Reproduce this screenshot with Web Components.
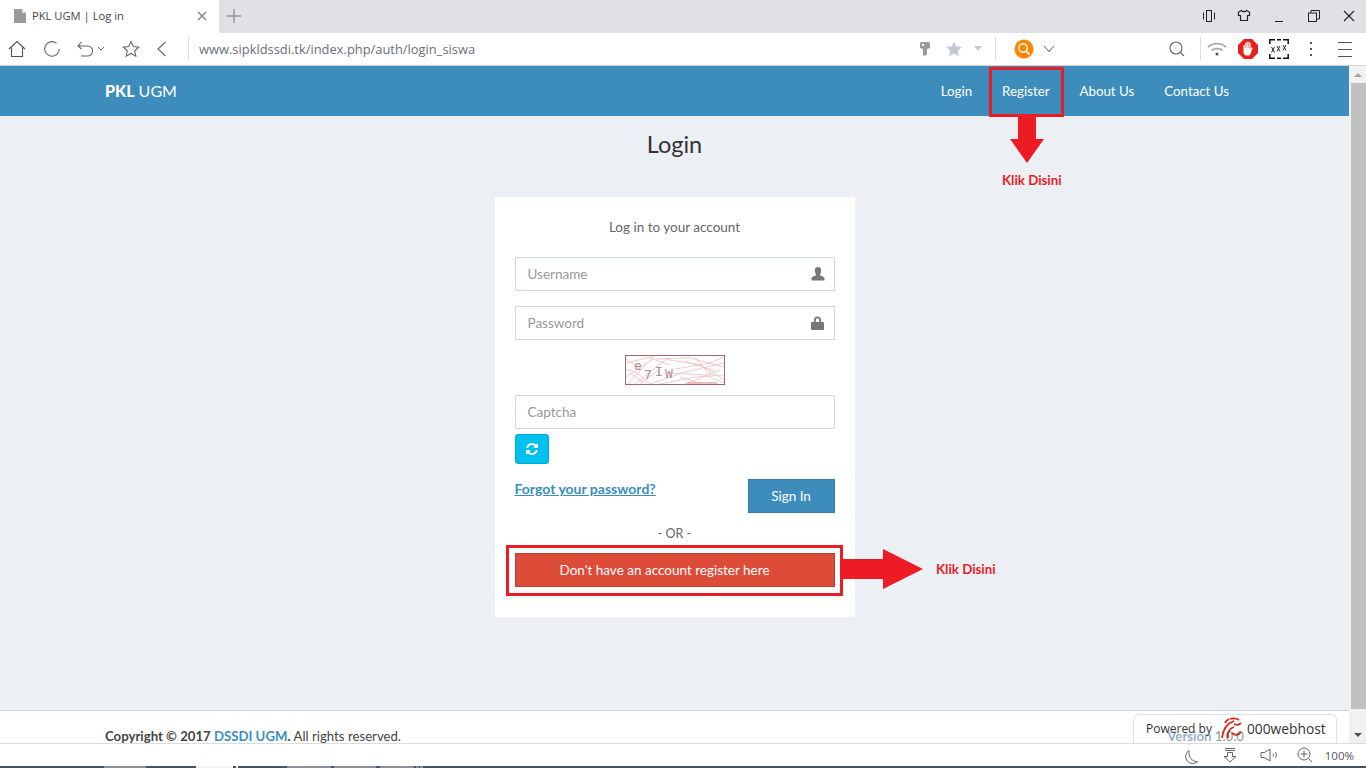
<!DOCTYPE html>
<html lang="en">
<head>
<meta charset="utf-8">
<title>PKL UGM | Log in</title>
<style>
    html, body { margin: 0; height: 100%; }
    body {
        width: 1366px;
        height: 768px;
        overflow: hidden;
        display: flex;
        flex-direction: column;
        position: relative;
        background: #fff;
        color: #444;
        font-family: "Lato", "Noto Sans", sans-serif;
        font-size: 13.3px;
    }
</style>
</head>
<body>
<browser-tabs tab-title="PKL UGM | Log in"></browser-tabs>
<browser-toolbar url="www.sipkldssdi.tk/index.php/auth/login_siswa"></browser-toolbar>
<page-viewport>
    <top-navbar></top-navbar>
    <login-page></login-page>
    <page-footer></page-footer>
</page-viewport>
<browser-status></browser-status>
<click-callout box="989,67,75,50" arrow="down" ax="1010" ay="116" tx="1002" ty="172"></click-callout>
<click-callout box="506,545,337,51" arrow="right" ax="843" ay="549" tx="936" ty="561"></click-callout>
<host-badge></host-badge>

<script>
const ICONS = {
    page: '<svg viewBox="0 0 14 16" width="14" height="16"><path fill="#9a9a9a" d="M1 1h8l4 4v10H1z"/><path fill="#fff" d="M9 1v4h4z" opacity=".7"/></svg>',
    close: '<svg viewBox="0 0 10 10" width="10" height="10"><path stroke="#8a8a8a" stroke-width="1.6" d="M1 1l8 8M9 1l-8 8"/></svg>',
    plus: '<svg viewBox="0 0 14 14" width="14" height="14"><path stroke="#777" d="M7 0v14M0 7h14"/></svg>',
    vibrate: '<svg viewBox="0 0 14 14" width="14" height="14" fill="none" stroke="#222"><rect x="4.5" y="1.5" width="5" height="11"/><path d="M1.5 3.5v7M12.5 3.5v7"/></svg>',
    shirt: '<svg viewBox="0 0 14 14" width="14" height="14" fill="none" stroke="#222" stroke-width="1.2"><path d="M4.5 1.5L1.5 3v3.5h2v5h7v-5h2V3l-3-1.5C9 3 5 3 4.5 1.5z"/></svg>',
    minimize: '<svg viewBox="0 0 14 14" width="14" height="14"><path stroke="#222" d="M3 12.5h8"/></svg>',
    restore: '<svg viewBox="0 0 14 14" width="14" height="14" fill="none" stroke="#222"><rect x="1.5" y="4" width="8" height="8.5"/><path d="M4 4V1.5h8.5V10H9.500"/></svg>',
    winclose: '<svg viewBox="0 0 14 14" width="14" height="14"><path stroke="#222" stroke-width="1.1" d="M2 2l10 10M12 2L2 12"/></svg>',
    home: '<svg viewBox="0 0 18 18" width="18" height="18" fill="none" stroke="#555" stroke-width="1.1"><path d="M1 9l8-7.500L17 9M3.500 7.500v9h11v-9"/></svg>',
    reload: '<svg viewBox="0 0 18 18" width="18" height="18" fill="none" stroke="#666" stroke-width="1.1"><path d="M13.500 3.200A7.300 7.300 0 1 0 16.300 9"/></svg>',
    undo: '<svg viewBox="0 0 18 18" width="18" height="18" fill="none" stroke="#666" stroke-width="1.1"><path d="M3 6h8.500a5 5 0 0 1 0 10H5M5.500 2L2 6l3.500 3"/></svg>',
    caretSmall: '<svg viewBox="0 0 8 6" width="8" height="6" fill="none" stroke="#666"><path d="M1 1l3 3 3-3"/></svg>',
    star: '<svg viewBox="0 0 18 18" width="18" height="18" fill="none" stroke="#666" stroke-width="1.100"><path d="M9 1.500l2.300 5 5.400.6-4 3.700 1.100 5.400L9 13.500l-4.800 2.700 1.100-5.400-4-3.700 5.400-.6z"/></svg>',
    back: '<svg viewBox="0 0 12 18" width="12" height="18" fill="none" stroke="#666" stroke-width="1.100"><path d="M9.500 2L2 9l7.500 7"/></svg>',
    key: '<svg viewBox="0 0 12 16" width="12" height="16"><path fill="#999" d="M2.500 1h7A1.500 1.500 0 0 1 11 2.500V7L8 8v5l-2 2-2-1V8L1 7V2.500A1.500 1.500 0 0 1 2.500 1z"/><path fill="#fff" d="M3 3h2v2H3z"/></svg>',
    starFill: '<svg viewBox="0 0 16 16" width="16" height="16"><path fill="#c4c8d0" d="M8 .5l2.300 5 5.400.6-4 3.700 1.100 5.400L8 12.500l-4.800 2.700 1.100-5.400-4-3.700 5.400-.6z"/></svg>',
    caretFill: '<svg viewBox="0 0 10 6" width="10" height="6"><path fill="#c4c8d0" d="M1 0h8L5 5z"/></svg>',
    orange: '<svg viewBox="0 0 20 20" width="20" height="20"><circle cx="10" cy="10" r="9.500" fill="#ff8400"/><circle cx="9" cy="9" r="4.200" fill="none" stroke="#fff" stroke-width="1.400"/><path stroke="#fff" stroke-width="1.600" d="M12 12l3.500 3.500"/></svg>',
    chevron: '<svg viewBox="0 0 12 8" width="12" height="8" fill="none" stroke="#777" stroke-width="1.100"><path d="M1 1l5 5.500L11 1"/></svg>',
    search: '<svg viewBox="0 0 16 16" width="16" height="16" fill="none" stroke="#666" stroke-width="1.100"><circle cx="7" cy="7" r="6"/><path d="M11.500 11.500l3.500 3.500"/></svg>',
    wifi: '<svg viewBox="0 0 20 14" width="20" height="14" fill="none" stroke="#aaa" stroke-width="1.800"><path d="M1 5c5-4.500 13-4.500 18 0M4.500 8.500c3-2.500 8-2.500 11 0"/><circle cx="10" cy="12" r="1.500" fill="#555" stroke="none"/></svg>',
    adblock: '<svg viewBox="0 0 20 20" width="20" height="20"><path fill="#e8201c" d="M6 0h8l6 6v8l-6 6H6l-6-6V6z"/><path fill="#fff" d="M5.500 10V6h1.300v3h.5V3.500h1.400V9h.5V2.800h1.400V9h.5V3.500h1.400V10l1.200-1.800 1 .6-2.200 6.200c-.5 1-1.200 1.500-2.300 1.500H8.500c-2 0-3-1.500-3-3.500z"/></svg>',
    xxx: '<svg viewBox="0 0 20 20" width="20" height="20" fill="none" stroke="#111" stroke-width="1.500"><path d="M.8 5V.8H6M14 .8h5.200V5M19.200 15v4.200H14M6 19.200H.8V15M8 .8h4M8 19.200h4"/><path stroke-width=".9" d="M2.500 8l3 5.500M5.500 8l-3 5.500M8 7l3 5.500M11 7l-3 5.500M14 6l3 5.500M17 6l-3 5.500"/></svg>',
    dots: '<svg viewBox="0 0 4 16" width="4" height="16"><path fill="#555" d="M1 1h2v2H1zM1 7h2v2H1zM1 13h2v2H1z"/></svg>',
    menu: '<svg viewBox="0 0 16 16" width="16" height="16"><path stroke="#555" d="M1 1.500h14M1 8.500h14M1 15.500h14"/></svg>',
    moon: '<svg viewBox="0 0 16 16" width="16" height="16" fill="none" stroke="#666"><path d="M6 1.500a7 7 0 1 0 8.500 11C9.500 13 5 8 6 1.500z"/></svg>',
    download: '<svg viewBox="0 0 14 16" width="14" height="16" fill="none" stroke="#666"><path d="M2 1.500h10M2 3.500h10M4.500 5.500h5v4H13L7 15 1 9.500h3.500z"/></svg>',
    speaker: '<svg viewBox="0 0 20 14" width="20" height="14" fill="none" stroke="#666"><path d="M1 4.500h3.500L10 1v12L4.500 9.500H1zM13 5.500c.6 1 .6 2 0 3M15.500 4c1 2 1 4 0 6"/></svg>',
    zoom: '<svg viewBox="0 0 16 16" width="16" height="16" fill="none" stroke="#666"><circle cx="7" cy="7" r="6"/><path d="M7 3.500v7M3.500 7h7M12 12l3 3"/></svg>',
    user: '<svg viewBox="0 0 14 14" width="14" height="14"><path fill="#777" d="M7 0c2 0 3.200 1.500 3.200 3.500S9 7.500 8.800 8.200c1.800.9 4.400 1.300 4.700 3.300v2H.5v-2c.3-2 2.900-2.400 4.700-3.300C5 7.500 3.800 5.500 3.800 3.500S5 0 7 0z"/></svg>',
    lock: '<svg viewBox="0 0 13 14" width="13" height="14"><path fill="#777" d="M3 6V4a3.500 3.500 0 0 1 7 0v2h2a1 1 0 0 1 1 1v6a1 1 0 0 1-1 1H1a1 1 0 0 1-1-1V7a1 1 0 0 1 1-1zm1.800 0h3.400V4a1.700 1.700 0 0 0-3.400 0z"/></svg>',
    refresh: '<svg viewBox="0 0 1792 1792" width="14" height="14"><path fill="#fff" d="M1639 1056q0 5-1 7-64 268-268 434.500t-478 166.500q-146 0-282.500-55t-243.500-157l-129 129q-19 19-45 19t-45-19-19-45v-448q0-26 19-45t45-19h448q26 0 45 19t19 45-19 45l-137 137q71 66 161 102t187 36q134 0 250-65t186-179q11-17 53-117 8-23 30-23h192q13 0 22.500 9.500t9.500 22.500zm25-800v448q0 26-19 45t-45 19h-448q-26 0-45-19t-19-45 19-45l138-138q-148-137-349-137-134 0-250 65t-186 179q-11 17-53 117-8 23-30 23h-199q-13 0-22.500-9.500t-9.500-22.500v-7q65-268 270-434.500t480-166.500q146 0 284 55.500t245 156.500l130-129q19-19 45-19t45 19 19 45z"/></svg>'
};

class UiIcon extends HTMLElement {
    connectedCallback() {
        const box = this.getAttribute('box') || 24;
        this.attachShadow({ mode: 'open' }).innerHTML = `
            <style>
                :host { display: flex; align-items: center; justify-content: center; flex: none; width: ${box}px; height: 24px; }
                svg { display: block; }
            </style>
            ${ICONS[this.getAttribute('name')]}
        `;
    }
}

class BrowserTabs extends HTMLElement {
    connectedCallback() {
        this.attachShadow({ mode: 'open' }).innerHTML = `
            <style>
                :host { display: flex; flex: none; height: 33px; box-sizing: border-box; padding-bottom: 2px; background: #e0e1e5; align-items: center; font-family: "Open Sans", sans-serif; position: relative; }
                .tab { position: absolute; left: 0; top: 0; width: 219px; height: 33px; box-sizing: border-box; background: #fff; display: flex; align-items: center; padding: 0 9px 2px 13px; font-size: 11.2px; color: #4a3f50; }
                .title { margin-left: 5px; flex: 1; white-space: nowrap; }
                .new { margin-left: 222px; }
                .win { margin-left: auto; display: flex; gap: 11px; padding-right: 5px; }
            </style>
            <div class="tab">
                <ui-icon name="page" box="14"></ui-icon>
                <span class="title">${this.getAttribute('tab-title')}</span>
                <ui-icon name="close" box="16"></ui-icon>
            </div>
            <ui-icon class="new" name="plus"></ui-icon>
            <div class="win">
                <ui-icon name="vibrate"></ui-icon>
                <ui-icon name="shirt"></ui-icon>
                <ui-icon name="minimize"></ui-icon>
                <ui-icon name="restore"></ui-icon>
                <ui-icon name="winclose"></ui-icon>
            </div>
        `;
    }
}

class BrowserToolbar extends HTMLElement {
    connectedCallback() {
        this.attachShadow({ mode: 'open' }).innerHTML = `
            <style>
                :host { display: flex; flex: none; height: 33px; box-sizing: border-box; align-items: center; background: #fff; border-bottom: 1px solid #d0d0d0; padding: 0 9px 0 5px; font-family: "Open Sans", sans-serif; }
                .sep { width: 1px; height: 24px; background: #dcdcdc; flex: none; }
                .url { margin-left: 10px; font-size: 12.9px; color: #6e6e78; white-space: nowrap; }
                .right { margin-left: auto; display: flex; align-items: center; }
            </style>
            <ui-icon name="home"></ui-icon>
            <ui-icon name="reload" style="margin-left:11px"></ui-icon>
            <ui-icon name="undo" style="margin-left:9px"></ui-icon>
            <ui-icon name="caretSmall" box="8"></ui-icon>
            <ui-icon name="star" style="margin-left:14px"></ui-icon>
            <ui-icon name="back" style="margin-left:7px"></ui-icon>
            <span class="sep" style="margin-left:14px"></span>
            <span class="url">${this.getAttribute('url')}</span>
            <div class="right">
                <ui-icon name="key"></ui-icon>
                <ui-icon name="starFill" style="margin-left:5px"></ui-icon>
                <ui-icon name="caretFill" box="12" style="margin-left:6px"></ui-icon>
                <span class="sep" style="margin-left:11px"></span>
                <ui-icon name="orange" style="margin-left:16px"></ui-icon>
                <ui-icon name="chevron" style="margin-left:1px"></ui-icon>
                <ui-icon name="search" style="margin-left:104px"></ui-icon>
                <span class="sep" style="margin-left:11px"></span>
                <ui-icon name="wifi" style="margin-left:4px"></ui-icon>
                <ui-icon name="adblock" style="margin-left:7px"></ui-icon>
                <ui-icon name="xxx" style="margin-left:7px"></ui-icon>
                <ui-icon name="dots" style="margin-left:8px"></ui-icon>
                <ui-icon name="menu" style="margin-left:10px"></ui-icon>
            </div>
        `;
    }
}

class PageViewport extends HTMLElement {
    connectedCallback() {
        this.attachShadow({ mode: 'open' }).innerHTML = `
            <style>
                :host { display: flex; flex: 1; min-height: 0; }
                .main { width: 1349px; display: flex; flex-direction: column; min-height: 0; }
                .bar { flex: 1; background: #f1f1f1; display: flex; flex-direction: column; align-items: center; }
                .up, .down { height: 17px; flex: none; display: flex; align-items: center; justify-content: center; }
                .up::before { content: ""; border: 4px solid transparent; border-top: 0; border-bottom: 4px solid #a3a3a3; }
                .down::before { content: ""; border: 4px solid transparent; border-bottom: 0; border-top: 4px solid #505050; }
                .track { flex: 1; width: 100%; display: flex; flex-direction: column; align-items: flex-end; }
                .thumb { width: 15px; height: 626px; background: #c1c1c1; }
            </style>
            <div class="main"><slot></slot></div>
            <div class="bar">
                <div class="up"></div>
                <div class="track"><div class="thumb"></div></div>
                <div class="down"></div>
            </div>
        `;
    }
}

class TopNavbar extends HTMLElement {
    connectedCallback() {
        this.attachShadow({ mode: 'open' }).innerHTML = `
            <style>
                :host { display: flex; flex: none; height: 50px; background: #3c8dbc; color: #fff; align-items: center; justify-content: space-between; padding: 0 105px; }
                .brand { font-size: 16px; padding-bottom: 2px; }
                b { font-weight: 900; }
                nav { display: flex; }
                a { color: #fff; text-decoration: none; padding: 15px; line-height: 20px; }
            </style>
            <div class="brand"><b>PKL</b> UGM</div>
            <nav>
                <a href="#">Login</a>
                <a href="#">Register</a>
                <a href="#">About Us</a>
                <a href="#">Contact Us</a>
            </nav>
        `;
    }
}

class FieldInput extends HTMLElement {
    connectedCallback() {
        const icon = this.getAttribute('icon');
        this.attachShadow({ mode: 'open' }).innerHTML = `
            <style>
                :host { display: flex; align-items: center; justify-content: space-between; height: 34px; box-sizing: border-box; border: 1px solid #d2d6de; padding: 0 8px 0 12px; color: #999; background: #fff; }
                span { padding-bottom: 1px; }
            </style>
            <span>${this.getAttribute('placeholder')}</span>
            ${icon ? `<ui-icon name="${icon}" box="16"></ui-icon>` : ''}
        `;
    }
}

class CaptchaImage extends HTMLElement {
    connectedCallback() {
        this.attachShadow({ mode: 'open' }).innerHTML = `
            <style>
                :host { display: block; width: 100px; height: 30px; }
                svg { display: block; }
                text { font-family: "DejaVu Sans Mono", monospace; fill: #b08a92; font-size: 13px; text-anchor: middle; }
            </style>
            <svg viewBox="0 0 100 30" width="100" height="30">
                <rect x=".5" y=".5" width="99" height="29" fill="#fff" stroke="#9a6a70"/>
                <g fill="none" stroke="#ebbcc0" stroke-width=".8">
                    <path d="M1 8L30 1M1 22L28 4M3 29L22 8M10 29L40 5M25 29L60 17L99 8M30 4L65 3L99 12M40 4L75 10L99 25M45 18L80 20L99 28M50 14L85 8L99 2M35 29L70 22L99 20M1 14L12 18L25 29M60 29L95 15M70 2L85 20M1 4L15 14M15 29L35 14M22 2L45 10M55 22L75 28M60 6L90 16M5 18L18 27"/>
                </g>
                <path d="M62 28h30" stroke="#eca4a8" stroke-width="1.500"/>
                <text x="13" y="15">e</text>
                <text x="23" y="24">7</text>
                <text x="34" y="21">I</text>
                <text x="44" y="23">W</text>
            </svg>
        `;
    }
}

class LoginPage extends HTMLElement {
    connectedCallback() {
        this.attachShadow({ mode: 'open' }).innerHTML = `
            <style>
                :host { display: flex; flex: 1; flex-direction: column; align-items: center; min-height: 0; background: #ecf0f5; font-size: 13.5px; }
                h1 { margin: 15px 0 40px; font-size: 23.5px; line-height: 26px; font-weight: 400; color: #333; }
                .box { width: 360px; box-sizing: border-box; background: #fff; padding: 20px; color: #666; }
                .msg { text-align: center; line-height: 20px; margin-bottom: 20px; }
                field-input { margin-bottom: 15px; }
                field-input.cap { margin-bottom: 5px; }
                captcha-image { margin: 0 auto 10px; }
                .refresh { width: 34px; height: 30px; box-sizing: border-box; background: #00c0ef; border: 1px solid #00acd6; border-radius: 3px; display: flex; align-items: center; justify-content: center; }
                .row { display: flex; justify-content: space-between; margin-top: 15px; }
                .forgot { color: #3c8dbc; font-weight: 700; font-size: 14px; line-height: 20px; }
                .btn { box-sizing: border-box; height: 34px; color: #fff; display: flex; align-items: center; justify-content: center; border: 1px solid; text-decoration: none; padding-bottom: 1px; }
                .signin { width: 87px; background: #3c8dbc; border-color: #367fa9; }
                .or { text-align: center; font-size: 12.5px; line-height: 20px; margin: 10px 0; padding-top: 1px; height: 19px; }
                .register { background: #dd4b39; border-color: #b5402f; padding-right: 20px; }
                .end { height: 10px; }
            </style>
            <h1>Login</h1>
            <div class="box">
                <div class="msg">Log in to your account</div>
                <field-input placeholder="Username" icon="user"></field-input>
                <field-input placeholder="Password" icon="lock"></field-input>
                <captcha-image></captcha-image>
                <field-input class="cap" placeholder="Captcha"></field-input>
                <div class="refresh"><ui-icon name="refresh" box="14"></ui-icon></div>
                <div class="row">
                    <a class="forgot" href="#">Forgot your password?</a>
                    <a class="btn signin" href="#">Sign In</a>
                </div>
                <div class="or">- OR -</div>
                <a class="btn register" href="#">Don't have an account register here</a>
                <div class="end"></div>
            </div>
        `;
    }
}

class PageFooter extends HTMLElement {
    connectedCallback() {
        this.attachShadow({ mode: 'open' }).innerHTML = `
            <style>
                :host { display: flex; flex: none; height: 33px; box-sizing: border-box; background: #fff; border-top: 1px solid #d2d6de; padding: 18px 105px 0; font-size: 13.2px; line-height: 14px; justify-content: space-between; color: #444; }
                a { color: #3c8dbc; text-decoration: none; }
                .version { position: relative; z-index: 2; opacity: .55; }
                .version b { color: #3f6f95; }
            </style>
            <div><b>Copyright &copy; 2017 <a href="#">DSSDI UGM</a>.</b> All rights reserved.</div>
            <div class="version"><b>Version</b> 1.0.0</div>
        `;
    }
}

class BrowserStatus extends HTMLElement {
    connectedCallback() {
        this.attachShadow({ mode: 'open' }).innerHTML = `
            <style>
                :host { display: block; flex: none; height: 25px; box-sizing: border-box; background: #fff; border-top: 1px solid #dcdcdc; font-family: "Open Sans", sans-serif; }
                .row { height: 22px; display: flex; align-items: center; justify-content: flex-end; padding-right: 12px; font-size: 11.5px; color: #555; }
                .pct { margin-left: 8px; }
                .task { height: 2px; display: flex; background: #48535f; }
                .task i { display: block; flex: none; background: #8a9096; }
                .task i.on { background: #f2f2f2; }
                .task u { display: block; flex: none; }
            </style>
            <div class="row">
                <ui-icon name="moon" style="margin-top:3px"></ui-icon>
                <ui-icon name="download" style="margin-left:15px"></ui-icon>
                <ui-icon name="speaker" style="margin-left:16px"></ui-icon>
                <ui-icon name="zoom" style="margin-left:11px"></ui-icon>
                <span class="pct">100%</span>
            </div>
            <div class="task">
                <u style="width:104px"></u><i style="width:42px"></i>
                <u style="width:50px"></u><i class="on" style="width:37px"></i>
                <u style="width:3px"></u><i class="on" style="width:2px"></i>
                <u style="width:49px"></u><i style="width:44px"></i>
                <u style="width:3px"></u><i style="width:42px"></i>
                <u style="width:4px"></u><i style="width:34px"></i>
                <u style="width:2px"></u><i style="width:3px"></i>
                <u style="width:1px"></u><i style="width:3px"></i>
            </div>
        `;
    }
}

// red hand-drawn marks lying over the page
class ClickCallout extends HTMLElement {
    connectedCallback() {
        const [x, y, w, h] = this.getAttribute('box').split(',');
        const down = this.getAttribute('arrow') === 'down';
        const ax = this.getAttribute('ax'), ay = this.getAttribute('ay');
        const arrow = down
            ? `<svg style="left:${ax}px;top:${ay}px" width="34" height="47"><path fill="#ed1c24" d="M8 0h18v23h8L17 47 0 23h8z"/></svg>`
            : `<svg style="left:${ax}px;top:${ay}px" width="80" height="40"><path fill="#ed1c24" d="M0 10h40V0l40 20-40 20V30H0z"/></svg>`;
        this.attachShadow({ mode: 'open' }).innerHTML = `
            <style>
                :host { display: block; position: absolute; left: 0; top: 0; z-index: 5; }
                .box { position: absolute; left: ${x}px; top: ${y}px; width: ${w}px; height: ${h}px; box-sizing: border-box; border: 3px solid #ed1c24; }
                svg { position: absolute; display: block; }
                .tip { position: absolute; left: ${this.getAttribute('tx')}px; top: ${this.getAttribute('ty')}px; color: #ed1c24; font-weight: 700; font-size: 13.3px; line-height: 16px; white-space: nowrap; }
            </style>
            <div class="box"></div>
            ${arrow}
            <div class="tip">Klik Disini</div>
        `;
    }
}

class HostBadge extends HTMLElement {
    connectedCallback() {
        this.attachShadow({ mode: 'open' }).innerHTML = `
            <style>
                :host { position: absolute; left: 1133px; top: 714px; width: 204px; height: 29px; box-sizing: border-box; padding: 0 0 2px 12px; z-index: 1; background: #fff; border: 1px solid #e0e0e0; border-bottom: 0; border-radius: 6px 6px 0 0; display: flex; align-items: center; font-family: "Open Sans", sans-serif; color: #333; white-space: nowrap; }
                .by { font-size: 12px; }
                svg { margin-left: 6px; display: block; }
                .name { font-size: 13.8px; margin-left: 5px; }
            </style>
            <span class="by">Powered by</span>
            <svg viewBox="0 0 24 24" width="24" height="24" fill="none" stroke="#e2231a" stroke-width="1.800"><path d="M4 22C5 13 10 7 16 5M10 22c-1-6 2-10 6-11M14 17c3 3 7 2 9-1M12 3c3-1 6-1 9 1M7 7C8 5 9 4 11 3M16 8c2 1 5 1 7-1"/></svg>
            <span class="name">000webhost</span>
        `;
    }
}

customElements.define('ui-icon', UiIcon);
customElements.define('browser-tabs', BrowserTabs);
customElements.define('browser-toolbar', BrowserToolbar);
customElements.define('page-viewport', PageViewport);
customElements.define('top-navbar', TopNavbar);
customElements.define('field-input', FieldInput);
customElements.define('captcha-image', CaptchaImage);
customElements.define('login-page', LoginPage);
customElements.define('page-footer', PageFooter);
customElements.define('browser-status', BrowserStatus);
customElements.define('click-callout', ClickCallout);
customElements.define('host-badge', HostBadge);
</script>
</body>
</html>
